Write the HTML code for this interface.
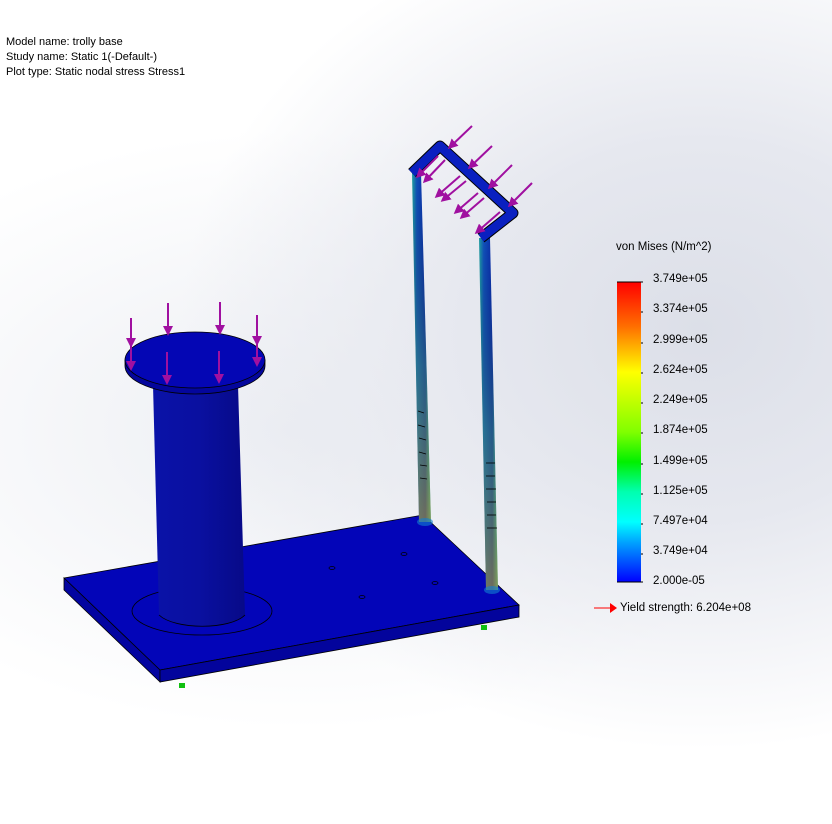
<!DOCTYPE html>
<html><head><meta charset="utf-8"><style>
html,body{margin:0;padding:0}
body{width:832px;height:824px;overflow:hidden;position:relative;font-family:"Liberation Sans",sans-serif;
background:radial-gradient(ellipse 520px 420px at 700px 330px,#dcdfe8 0%,#e6e8ef 45%,rgba(255,255,255,0) 100%),radial-gradient(ellipse 500px 300px at 300px 430px,#eceef3 0%,rgba(255,255,255,0) 100%),#fff}
.t{position:absolute;font-size:11px;color:#000;white-space:nowrap}
</style></head><body>
<div class="t" style="left:6px;top:35px;line-height:15px">Model name: trolly base<br>Study name: Static 1(-Default-)<br>Plot type: Static nodal stress Stress1</div>
<div class="t" style="left:616px;top:241px;font-size:11.5px">von Mises (N/m^2)</div>
<svg width="832" height="824" style="position:absolute;left:0;top:0">
<defs>
<linearGradient id="cb" x1="0" y1="0" x2="0" y2="1">
<stop offset="0" stop-color="#ff0000"/><stop offset="0.15" stop-color="#ff7000"/><stop offset="0.3" stop-color="#ffff00"/><stop offset="0.5" stop-color="#80ff00"/><stop offset="0.6" stop-color="#00f000"/><stop offset="0.7" stop-color="#00ffb0"/><stop offset="0.8" stop-color="#00ffff"/><stop offset="0.87" stop-color="#00a0ff"/><stop offset="1" stop-color="#0000ff"/>
</linearGradient>
<linearGradient id="rod" x1="0" y1="0" x2="1" y2="0">
<stop offset="0" stop-color="#20a0a0"/><stop offset="0.25" stop-color="#1050b8"/><stop offset="0.7" stop-color="#0a2aa8"/><stop offset="1" stop-color="#30a0a0"/>
</linearGradient>
<linearGradient id="rodlow" x1="0" y1="0" x2="0" y2="1">
<stop offset="0" stop-color="#000" stop-opacity="0"/><stop offset="0.55" stop-color="#60c040" stop-opacity="0.3"/><stop offset="1" stop-color="#c0a020" stop-opacity="0.55"/>
</linearGradient>
<linearGradient id="cyl" x1="0" y1="0" x2="1" y2="0">
<stop offset="0" stop-color="#0a12a8"/><stop offset="0.5" stop-color="#0a10a0"/><stop offset="1" stop-color="#070a88"/>
</linearGradient>
<marker id="ah" markerWidth="10" markerHeight="10" refX="7" refY="5" orient="auto" markerUnits="userSpaceOnUse"><path d="M0,0 L10,5 L0,10 Z" fill="#a010a0"/></marker>
</defs>
<rect x="617" y="282" width="24" height="300" fill="url(#cb)"/>
<line x1="617" y1="282" x2="643" y2="282" stroke="#000"/><line x1="617" y1="582" x2="643" y2="582" stroke="#000"/>
<g stroke="#000" stroke-width="1"><line x1="641" y1="312" x2="643" y2="312"/><line x1="641" y1="343" x2="643" y2="343"/><line x1="641" y1="373" x2="643" y2="373"/><line x1="641" y1="403" x2="643" y2="403"/><line x1="641" y1="433" x2="643" y2="433"/><line x1="641" y1="464" x2="643" y2="464"/><line x1="641" y1="494" x2="643" y2="494"/><line x1="641" y1="524" x2="643" y2="524"/><line x1="641" y1="554" x2="643" y2="554"/></g>
<g font-size="11.5" fill="#000">
<text x="653" y="282">3.749e+05</text><text x="653" y="312">3.374e+05</text><text x="653" y="343">2.999e+05</text><text x="653" y="373">2.624e+05</text><text x="653" y="403">2.249e+05</text><text x="653" y="433">1.874e+05</text><text x="653" y="464">1.499e+05</text><text x="653" y="494">1.125e+05</text><text x="653" y="524">7.497e+04</text><text x="653" y="554">3.749e+04</text><text x="653" y="584">2.000e-05</text>
<text x="620" y="611">Yield strength: 6.204e+08</text>
</g>
<line x1="594" y1="608" x2="610" y2="608" stroke="#f00"/><path d="M610,603 L617,608 L610,613Z" fill="#f00"/>
<path d="M64,578 L423,515 L519,605 L160,670 Z" fill="#0305b8" stroke="#000" stroke-width="0.8"/>
<path d="M64,578 L160,670 L160,682 L64,590 Z" fill="#0304a0" stroke="#000" stroke-width="0.8"/>
<path d="M160,670 L519,605 L519,617 L160,682 Z" fill="#03049c" stroke="#000" stroke-width="0.8"/>
<ellipse cx="202" cy="611" rx="70" ry="24" fill="none" stroke="#000" stroke-width="0.8"/>
<g fill="none" stroke="#000" stroke-width="0.8"><ellipse cx="332" cy="568" rx="3" ry="1.5"/><ellipse cx="404" cy="554" rx="3" ry="1.5"/><ellipse cx="362" cy="597" rx="3" ry="1.5"/><ellipse cx="435" cy="583" rx="3" ry="1.5"/></g>
<g fill="#10c010"><rect x="179" y="683" width="6" height="5"/><rect x="481" y="625" width="6" height="5"/></g>
<path d="M153,385 L238,385 L245,615 C230,630 175,630 159,615 Z" fill="url(#cyl)"/>
<path d="M159,615 C175,630 230,630 245,615" fill="none" stroke="#000" stroke-width="0.8"/>
<path d="M125,360 L125,366 A70,28 0 0 0 265,366 L265,360 Z" fill="#04069c" stroke="#000" stroke-width="0.8"/>
<ellipse cx="195" cy="360" rx="70" ry="28" fill="#0406b4" stroke="#000" stroke-width="0.8"/>
<path d="M412,173 L421,173 L431,522 L419,522 Z" fill="url(#rod)"/>
<path d="M412,173 L421,173 L431,522 L419,522 Z" fill="url(#rodlow)"/>
<path d="M479,238 L490,238 L498,590 L486,590 Z" fill="url(#rod)"/>
<path d="M479,238 L490,238 L498,590 L486,590 Z" fill="url(#rodlow)"/>
<ellipse cx="425" cy="522" rx="8" ry="4" fill="#1080d0" opacity="0.6"/>
<ellipse cx="492" cy="590" rx="8" ry="4" fill="#1080d0" opacity="0.6"/>
<g stroke="#000" stroke-width="0.8"><line x1="418" y1="411" x2="424" y2="413"/><line x1="418" y1="425" x2="425" y2="427"/><line x1="419" y1="438" x2="426" y2="440"/><line x1="419" y1="452" x2="426" y2="454"/><line x1="420" y1="465" x2="427" y2="466"/><line x1="420" y1="478" x2="427" y2="479"/>
<line x1="486" y1="463" x2="495" y2="463"/><line x1="486" y1="476" x2="495" y2="476"/><line x1="486" y1="489" x2="496" y2="489"/><line x1="487" y1="502" x2="496" y2="502"/><line x1="487" y1="515" x2="496" y2="515"/><line x1="487" y1="528" x2="497" y2="528"/></g>
<path d="M412,173 L440,146 L513,213 L481,238" fill="none" stroke="#000" stroke-width="11" stroke-linejoin="round"/>
<path d="M412,173 L440,146 L513,213 L481,238" fill="none" stroke="#0a20c0" stroke-width="9" stroke-linejoin="round"/>
<g stroke="#a010a0" stroke-width="2" marker-end="url(#ah)">
<line x1="472" y1="126" x2="450" y2="147"/><line x1="438" y1="156" x2="418" y2="176"/><line x1="445" y1="160" x2="425" y2="181"/>
<line x1="492" y1="146" x2="470" y2="167"/><line x1="460" y1="176" x2="437" y2="196"/><line x1="466" y1="181" x2="443" y2="200"/>
<line x1="512" y1="165" x2="490" y2="187"/><line x1="478" y1="193" x2="456" y2="212"/><line x1="484" y1="198" x2="462" y2="217"/>
<line x1="532" y1="183" x2="510" y2="205"/><line x1="500" y1="212" x2="477" y2="232"/>
<line x1="131" y1="318" x2="131" y2="345"/><line x1="131" y1="343" x2="131" y2="368"/><line x1="168" y1="303" x2="168" y2="333"/><line x1="220" y1="302" x2="220" y2="332"/><line x1="257" y1="315" x2="257" y2="343"/><line x1="257" y1="340" x2="257" y2="364"/><line x1="167" y1="352" x2="167" y2="382"/><line x1="219" y1="351" x2="219" y2="381"/>
</g>
</svg>
</body></html>
